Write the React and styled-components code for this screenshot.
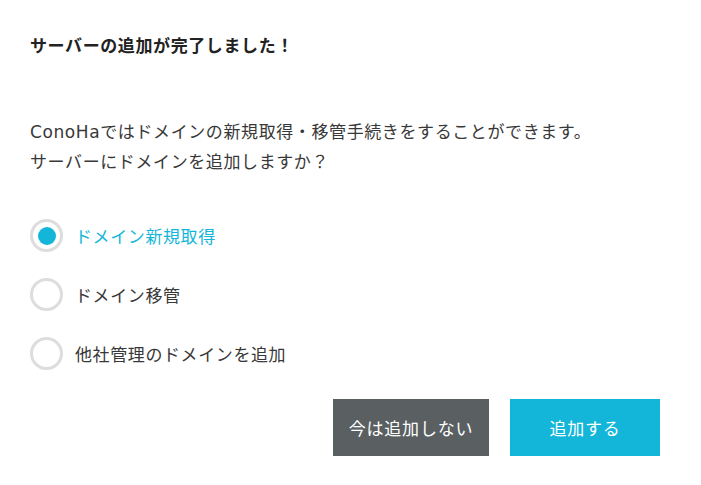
import React, { useState } from "react";
import styled, { createGlobalStyle } from "styled-components";

const GlobalStyle = createGlobalStyle`
    body {
        margin: 0;
        background: #ffffff;
        font-family: "DejaVu Sans", "Noto Sans CJK JP", sans-serif;
    }
`;

const Dialog = styled.div`
    width: 701px;
    height: 485px;
    box-sizing: border-box;
    padding: 34px 41px 0 30px;
    display: flex;
    flex-direction: column;
    color: #383838;
    font-size: 17px;
    letter-spacing: 0.6px;
`;

const Title = styled.h2`
    margin: 0;
    font-size: 17px;
    line-height: 24px;
    font-weight: bold;
    color: #222222;
`;

const Message = styled.p`
    margin: 59px 0 0;
    line-height: 30px;
`;

const OptionList = styled.div`
    margin-top: 42px;
    display: flex;
    flex-direction: column;
    gap: 26px;
`;

const Option = styled.label`
    display: flex;
    align-items: center;
    gap: 12px;
    height: 33px;
    cursor: pointer;
    color: ${({ checked }) => (checked ? "#13b6d8" : "#383838")};
    input {
        display: none;
    }
`;

const RadioMark = styled.span`
    width: 33px;
    height: 33px;
    box-sizing: border-box;
    border: 3px solid #dddddd;
    border-radius: 50%;
    display: flex;
    align-items: center;
    justify-content: center;
    flex-shrink: 0;
    &::after {
        content: "";
        width: 18px;
        height: 18px;
        border-radius: 50%;
        background: #13b6d8;
        display: ${({ checked }) => (checked ? "block" : "none")};
    }
`;

const Actions = styled.div`
    margin-top: 29px;
    display: flex;
    justify-content: flex-end;
    gap: 21px;
`;

const Button = styled.button`
    width: ${({ wide }) => (wide ? "156px" : "150px")};
    height: 57px;
    border: none;
    padding: 0;
    font-family: inherit;
    font-size: 17px;
    letter-spacing: 0.8px;
    color: #ffffff;
    cursor: pointer;
    background-color: ${({ variant }) =>
        variant === "primary" ? "#13b6d8" : "#5a6062"};
`;

const options = [
    { id: "new", label: "ドメイン新規取得" },
    { id: "transfer", label: "ドメイン移管" },
    { id: "other", label: "他社管理のドメインを追加" },
];

const App = () => {
    const [selected, setSelected] = useState("new");

    return (
        <>
            <GlobalStyle />
            <Dialog>
                <Title>サーバーの追加が完了しました！</Title>
                <Message>
                    ConoHaではドメインの新規取得・移管手続きをすることができます。
                    <br />
                    サーバーにドメインを追加しますか？
                </Message>
                <OptionList>
                    {options.map((option) => (
                        <Option key={option.id} checked={selected === option.id}>
                            <input
                                type="radio"
                                name="domain"
                                checked={selected === option.id}
                                onChange={() => setSelected(option.id)}
                            />
                            <RadioMark checked={selected === option.id} />
                            {option.label}
                        </Option>
                    ))}
                </OptionList>
                <Actions>
                    <Button wide>今は追加しない</Button>
                    <Button variant="primary">追加する</Button>
                </Actions>
            </Dialog>
        </>
    );
};

export default App;
